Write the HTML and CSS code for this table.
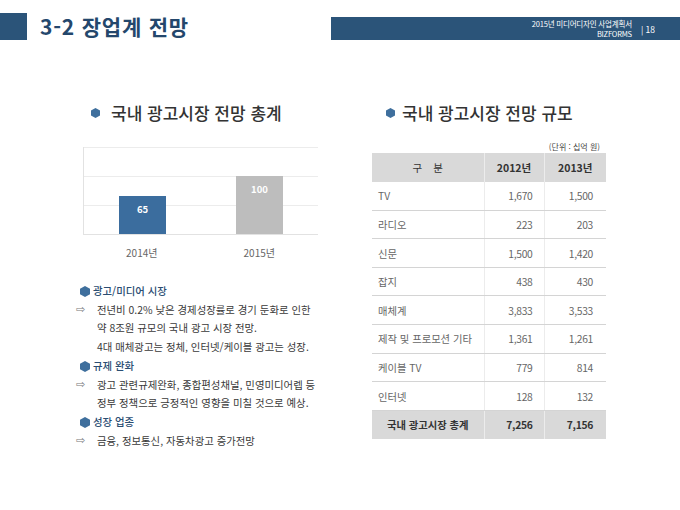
FILE: index.html
```html
<!DOCTYPE html>
<html lang="ko">
<head>
<meta charset="utf-8">
<title>3-2 장업계 전망</title>
<link rel="stylesheet" href="styles.css">
</head>
<body>
<svg class="watermark" width="680" height="510" viewBox="0 0 680 510">
  <polygon points="506,367 540,307 610,307 643,367 610,427 540,427" />
  <polyline points="684,393 676,387 605,387 545,465 575,512" />
  <polyline points="445,432 452,440 474,440 482,432" />
</svg>

<header class="top">
  <div class="top-block"></div>
  <h1 class="title">3-2 장업계 전망</h1>
  <div class="top-bar">
    <div class="doc-info">
      <div>2015년 미디어디자인 사업계획서</div>
      <div>BIZFORMS</div>
    </div>
    <div class="page-no">| 18</div>
  </div>
</header>

<main class="content">
  <section class="col-left">
    <h2 class="sec-head">
      <svg class="hex" width="9" height="10" viewBox="0 0 9 10"><polygon points="4.5,0 9,2.5 9,7.5 4.5,10 0,7.5 0,2.5"/></svg>
      <span>국내 광고시장 전망 총계</span>
    </h2>

    <div class="chart">
      <div class="plot">
        <div class="slot"><div class="bar bar-blue" style="height:38px">65</div></div>
        <div class="slot"><div class="bar bar-gray" style="height:58px">100</div></div>
      </div>
      <div class="xlabels">
        <div class="xlabel">2014년</div>
        <div class="xlabel">2015년</div>
      </div>
    </div>

    <div class="notes">
      <div class="note-head">
        <svg class="hex-lg" width="10" height="11" viewBox="0 0 10 11"><polygon points="5,0 10,2.7 10,8.3 5,11 0,8.3 0,2.7"/></svg>
        <span>광고/미디어 시장</span>
      </div>
      <div class="note">
        <span class="arrow">⇨</span>
        <div class="note-text">전년비 0.2% 낮은 경제성장률로 경기 둔화로 인한<br>약 8조원 규모의 국내 광고 시장 전망.<br>4대 매체광고는 정체, 인터넷/케이블 광고는 성장.</div>
      </div>
      <div class="note-head">
        <svg class="hex-lg" width="10" height="11" viewBox="0 0 10 11"><polygon points="5,0 10,2.7 10,8.3 5,11 0,8.3 0,2.7"/></svg>
        <span>규제 완화</span>
      </div>
      <div class="note">
        <span class="arrow">⇨</span>
        <div class="note-text">광고 관련규제완화, 종합편성채널, 민영미디어렙 등<br>정부 정책으로 긍정적인 영향을 미칠 것으로 예상.</div>
      </div>
      <div class="note-head">
        <svg class="hex-lg" width="10" height="11" viewBox="0 0 10 11"><polygon points="5,0 10,2.7 10,8.3 5,11 0,8.3 0,2.7"/></svg>
        <span>성장 업종</span>
      </div>
      <div class="note">
        <span class="arrow">⇨</span>
        <div class="note-text">금융, 정보통신, 자동차광고 증가전망</div>
      </div>
    </div>
  </section>

  <section class="col-right">
    <h2 class="sec-head sec-head-right">
      <svg class="hex" width="9" height="10" viewBox="0 0 9 10"><polygon points="4.5,0 9,2.5 9,7.5 4.5,10 0,7.5 0,2.5"/></svg>
      <span>국내 광고시장 전망 규모</span>
    </h2>
    <div class="unit">(단위 : 십억 원)</div>
    <table class="market">
      <colgroup><col class="c1"><col class="c2"><col class="c3"></colgroup>
      <thead>
        <tr><th class="th-name">구 분</th><th>2012년</th><th>2013년</th></tr>
      </thead>
      <tbody>
        <tr><td>TV</td><td class="num">1,670</td><td class="num n3">1,500</td></tr>
        <tr><td>라디오</td><td class="num">223</td><td class="num n3">203</td></tr>
        <tr><td>신문</td><td class="num">1,500</td><td class="num n3">1,420</td></tr>
        <tr><td>잡지</td><td class="num">438</td><td class="num n3">430</td></tr>
        <tr><td>매체계</td><td class="num">3,833</td><td class="num n3">3,533</td></tr>
        <tr><td>제작 및 프로모션 기타</td><td class="num">1,361</td><td class="num n3">1,261</td></tr>
        <tr><td>케이블 TV</td><td class="num">779</td><td class="num n3">814</td></tr>
        <tr><td>인터넷</td><td class="num">128</td><td class="num n3">132</td></tr>
      </tbody>
      <tfoot>
        <tr><td class="total-name">국내 광고시장 총계</td><td class="num">7,256</td><td class="num n3">7,156</td></tr>
      </tfoot>
    </table>
  </section>
</main>
</body>
</html>
```

FILE: styles.css
```css
html, body {
  margin: 0;
  padding: 0;
  background: #ffffff;
}

body {
  width: 680px;
  height: 510px;
  overflow: hidden;
  font-family: "Noto Sans CJK KR", "Noto Sans", sans-serif;
  color: #333;
}

.watermark {
  position: absolute;
  left: 0;
  top: 0;
  z-index: -1;
  fill: none;
  stroke: #e9eff6;
  stroke-width: 3;
}

/* ---------- header ---------- */
.top {
  display: flex;
  align-items: flex-end;
  padding-top: 13px;
  height: 27px;
}

.top-block {
  width: 27px;
  height: 27px;
  background: #2b5479;
}

.title {
  margin: 0 0 0 13px;
  font-size: 21px;
  line-height: 27px;
  font-weight: 700;
  color: #24476c;
  letter-spacing: 0.8px;
}

.top-bar {
  margin-left: auto;
  width: 349px;
  height: 23px;
  background: #2b5479;
  display: flex;
  justify-content: flex-end;
  align-items: center;
  color: #ffffff;
}

.doc-info {
  text-align: right;
  font-size: 7.5px;
  line-height: 10px;
  letter-spacing: -0.2px;
}

.page-no {
  font-size: 8.5px;
  margin: 0 25px 0 9px;
}

/* ---------- content ---------- */
.content {
  display: flex;
  padding-top: 63px;
}

.col-left {
  margin-left: 76px;
  width: 245px;
}

.col-right {
  margin-left: 51px;
  width: 234px;
}

.sec-head {
  margin: 0 0 0 15px;
  display: flex;
  align-items: center;
  gap: 11px;
  font-size: 17px;
  line-height: 20px;
  font-weight: 500;
  color: #333;
  white-space: nowrap;
}

.sec-head-right {
  margin-left: 14px;
  gap: 7px;
}

.hex, .hex-lg {
  fill: #3f6f9d;
  flex: none;
}

/* ---------- chart ---------- */
.chart {
  margin: 24px 0 0 7px;
  width: 235px;
}

.plot {
  height: 87px;
  display: flex;
  align-items: flex-end;
  border-left: 1px solid #e2e2e2;
  border-bottom: 1px solid #e2e2e2;
  background: repeating-linear-gradient(to bottom, #ececec 0, #ececec 1px, transparent 1px, transparent 29px);
}

.slot {
  flex: 1;
  display: flex;
  justify-content: center;
  align-items: flex-end;
}

.bar {
  width: 47px;
  box-sizing: border-box;
  padding-top: 7px;
  text-align: center;
  font-size: 9.5px;
  line-height: 12px;
  font-weight: 700;
  color: #ffffff;
}

.bar-blue { background: #3b6d9e; }
.bar-gray { background: #bdbdbd; }

.xlabels {
  display: flex;
  margin-top: 11px;
}

.xlabel {
  flex: 1;
  text-align: center;
  font-size: 10px;
  line-height: 14px;
  color: #666;
}

/* ---------- notes ---------- */
.notes {
  margin-top: 22px;
  font-size: 10.4px;
  line-height: 18.7px;
  white-space: nowrap;
}

.note-head {
  display: flex;
  align-items: center;
  gap: 3px;
  margin-left: 4px;
  color: #2a4d72;
  font-weight: 500;
}

.note {
  display: flex;
  color: #3a3a3a;
}

.arrow {
  width: 21px;
  flex: none;
  padding-left: 0;
  box-sizing: border-box;
  font-family: "DejaVu Sans", sans-serif;
  font-size: 11px;
  color: #777;
}

/* ---------- table ---------- */
.unit {
  margin: 19px 6px 1px 0;
  text-align: right;
  font-size: 8px;
  line-height: 10px;
  color: #444;
}

.market {
  width: 234px;
  border-collapse: collapse;
  table-layout: fixed;
  font-size: 10.3px;
}

.c1 { width: 112px; }
.c2 { width: 60px; }
.c3 { width: 62px; }

.market tr {
  height: 28.6px;
}

.market th {
  background: #d9d9d9;
  font-weight: 700;
  color: #333;
  font-size: 10.5px;
  padding: 0;
  text-align: center;
  border-left: 1px solid #ececec;
}

.market th:first-child {
  border-left: none;
}

.market .th-name {
  font-weight: 400;
  word-spacing: 8px;
}

.market td {
  padding: 0 0 0 6px;
  color: #666;
  border-bottom: 1px solid #d4d4d4;
  border-left: 1px solid #ececec;
  background: #ffffff;
  white-space: nowrap;
}

.market td:first-child {
  border-left: none;
}

.market td.num {
  text-align: right;
  padding: 0 11px 0 0;
  letter-spacing: -0.3px;
}

.market td.n3 {
  padding-right: 13px;
}

.market tfoot td {
  background: #d9d9d9;
  font-weight: 700;
  color: #333;
  border-bottom: none;
}

.market .total-name {
  text-align: center;
  padding: 0;
}
```
